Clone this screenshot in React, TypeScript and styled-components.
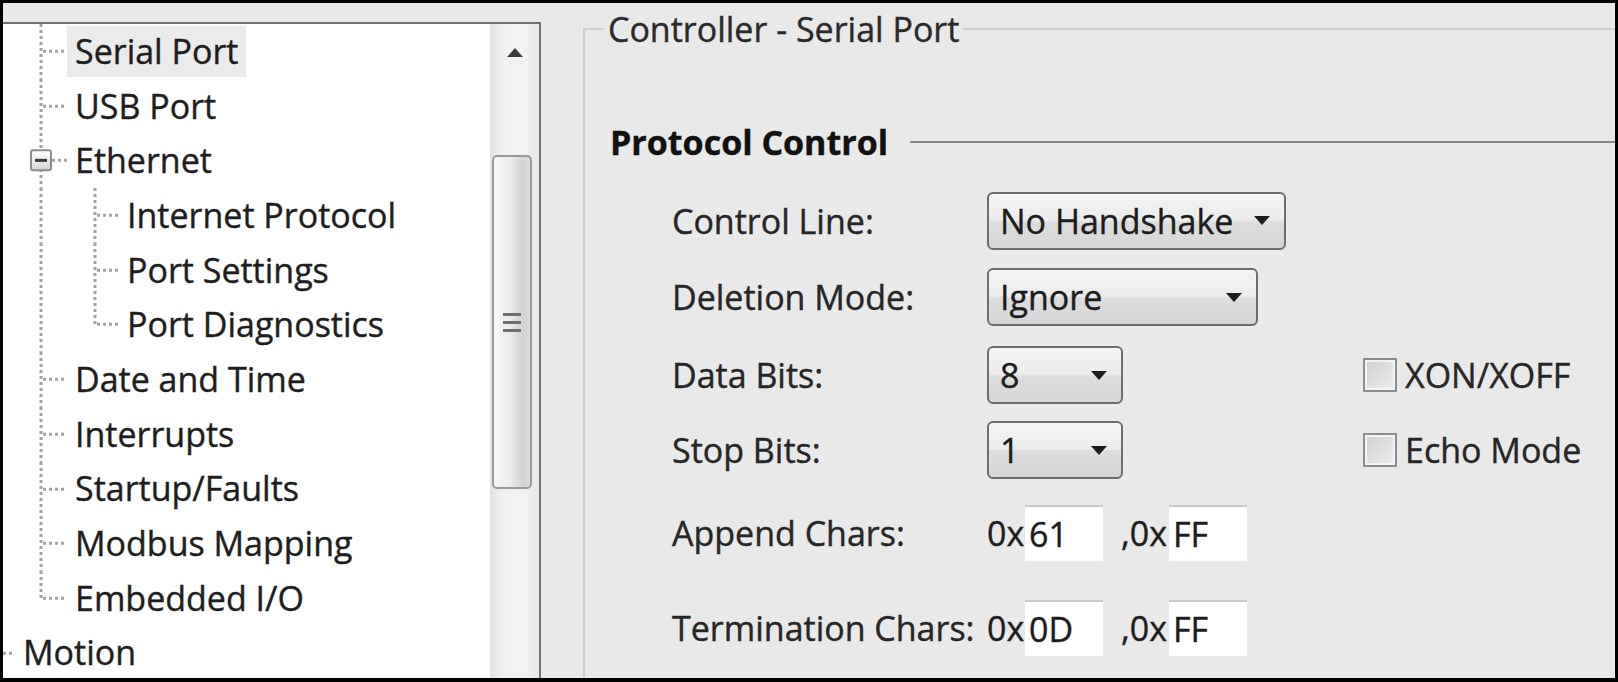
import React from "react";
import styled, { createGlobalStyle } from "styled-components";

const GlobalStyle = createGlobalStyle`
  html, body {
    margin: 0;
    padding: 0;
    background: #000;
  }
  body {
    font-family: "Open Sans", "Noto Sans", sans-serif;
  }
`;

// ---------------------------------------------------------------- data

type TreeNode = {
  label: string;
  level: 0 | 1 | 2;
  selected?: boolean;
  expanded?: boolean;
  last?: boolean;
};

const nodes: TreeNode[] = [
  { label: "Serial Port", level: 1, selected: true },
  { label: "USB Port", level: 1 },
  { label: "Ethernet", level: 1, expanded: true },
  { label: "Internet Protocol", level: 2 },
  { label: "Port Settings", level: 2 },
  { label: "Port Diagnostics", level: 2, last: true },
  { label: "Date and Time", level: 1 },
  { label: "Interrupts", level: 1 },
  { label: "Startup/Faults", level: 1 },
  { label: "Modbus Mapping", level: 1 },
  { label: "Embedded I/O", level: 1, last: true },
  { label: "Motion", level: 0 },
];

const GUIDE_WIDTH = { 0: 12, 1: 64, 2: 116 };

// ---------------------------------------------------------------- tree

const TreeGuides = ({ node, index }: { node: TreeNode; index: number }) => {
  const dot = { stroke: "#a3a3a3", strokeWidth: 3, strokeDasharray: "3 3" };
  const inLevel1 = index <= 10;
  const inLevel2 = index >= 3 && index <= 5;

  return (
    <svg width={GUIDE_WIDTH[node.level]} height="100%" style={{ flex: "none" }}>
      {inLevel1 && <line x1={38} y1={0} x2={38} y2={index === 10 ? "50%" : "100%"} {...dot} />}
      {inLevel2 && <line x1={92} y1={0} x2={92} y2={node.last ? "50%" : "100%"} {...dot} />}
      {node.level === 0 && <line x1={0} y1="50%" x2={12} y2="50%" {...dot} />}
      {node.level === 1 && (
        <line x1={node.expanded ? 49 : 40} y1="50%" x2={64} y2="50%" {...dot} />
      )}
      {node.level === 2 && <line x1={94} y1="50%" x2={116} y2="50%" {...dot} />}
      {node.expanded && (
        <g>
          <defs>
            <linearGradient id="exp" x1="0" y1="0" x2="0" y2="1">
              <stop offset="0" stopColor="#ffffff" />
              <stop offset="1" stopColor="#d4d4d4" />
            </linearGradient>
          </defs>
          <rect x={28} y="calc(50% - 10px)" width={20} height={20} rx={2} fill="url(#exp)" stroke="#8c8c8c" strokeWidth={2} />
          <line x1={32} y1="50%" x2={44} y2="50%" stroke="#3a3a3a" strokeWidth={3} />
        </g>
      )}
    </svg>
  );
};

// ---------------------------------------------------------------- form

const Combo = ({ value, width }: { value: string; width: number }) => (
  <ComboBox $width={width}>
    <span>{value}</span>
    <ComboArrow />
  </ComboBox>
);

const Check = ({ label }: { label: string }) => (
  <CheckCell>
    <CheckBox />
    {label}
  </CheckCell>
);

const HexPair = ({ a, b }: { a: string; b: string }) => (
  <HexGroup>
    <HexPrefix>0x</HexPrefix>
    <HexBox>{a}</HexBox>
    <HexSep>,0x</HexSep>
    <HexBox>{b}</HexBox>
  </HexGroup>
);

export default function App() {
  return (
    <>
      <GlobalStyle />
      <Screen>
        <LeftColumn>
          <TreePanel>
            <TreeList>
              {nodes.map((n, i) => (
                <TreeRow key={n.label}>
                  <TreeGuides node={n} index={i} />
                  <TreeLabel $selected={!!n.selected}>{n.label}</TreeLabel>
                </TreeRow>
              ))}
            </TreeList>
            <ScrollBar>
              <ScrollButton>
                <UpArrow />
              </ScrollButton>
              <ScrollTrack>
                <Thumb>
                  <Grip>
                    <i />
                    <i />
                    <i />
                  </Grip>
                </Thumb>
              </ScrollTrack>
            </ScrollBar>
          </TreePanel>
        </LeftColumn>

        <RightPanel>
          <GroupBox>
            <GroupTitle>Controller - Serial Port</GroupTitle>
            <SectionHeader>Protocol Control</SectionHeader>
            <Form>
              <FieldRow $top={29} $height={59}>
                <FieldLabel>Control Line:</FieldLabel>
                <Combo value="No Handshake" width={299} />
              </FieldRow>
              <FieldRow $top={17} $height={60}>
                <FieldLabel>Deletion Mode:</FieldLabel>
                <Combo value="Ignore" width={271} />
              </FieldRow>
              <FieldRow $top={19} $height={57}>
                <FieldLabel>Data Bits:</FieldLabel>
                <Combo value="8" width={136} />
                <Check label="XON/XOFF" />
              </FieldRow>
              <FieldRow $top={18} $height={58}>
                <FieldLabel>Stop Bits:</FieldLabel>
                <Combo value="1" width={136} />
                <Check label="Echo Mode" />
              </FieldRow>
              <FieldRow $top={26} $height={56}>
                <FieldLabel>Append Chars:</FieldLabel>
                <HexPair a="61" b="FF" />
              </FieldRow>
              <FieldRow $top={38} $height={57}>
                <FieldLabel>Termination Chars:</FieldLabel>
                <HexPair a="0D" b="FF" />
              </FieldRow>
            </Form>
          </GroupBox>
        </RightPanel>
      </Screen>
    </>
  );
}

// =================================================================

const Screen = styled.div`
  width: 1618px;
  height: 682px;
  box-sizing: border-box;
  border: 3px solid #000;
  border-bottom-width: 4px;
  background: #e9e9e9;
  display: flex;
  overflow: hidden;
  color: #1e1e1e;
  font-size: 34px;
  -webkit-text-stroke: 0.4px currentColor;
`;

const LeftColumn = styled.div`
  width: 538px;
  flex: none;
  padding-top: 19px;
  display: flex;
  flex-direction: column;
`;

const TreePanel = styled.div`
  flex: 1;
  display: flex;
  min-height: 0;
  background: #fff;
  border-top: 2px solid #6f6f6f;
  border-right: 2px solid #6f6f6f;
`;

const TreeList = styled.div`
  flex: 1;
  overflow: hidden;
`;

const TreeRow = styled.div`
  height: 54.7px;
  display: flex;
  align-items: center;
  white-space: nowrap;
`;

const TreeLabel = styled.span<{ $selected: boolean }>`
  height: 51px;
  line-height: 51px;
  padding: 0 8px;
  background: ${(p) => (p.$selected ? "#ebebeb" : "transparent")};
`;

const ScrollBar = styled.div`
  width: 49px;
  flex: none;
  display: flex;
  flex-direction: column;
  background: linear-gradient(to right, #e2e2e2, #f1f1f1 25%, #f3f3f3 70%, #e6e6e6);
`;

const ScrollButton = styled.div`
  height: 56px;
  display: flex;
  align-items: center;
  justify-content: center;
`;

const UpArrow = styled.div`
  width: 0;
  height: 0;
  border-left: 8px solid transparent;
  border-right: 8px solid transparent;
  border-bottom: 9px solid #3a3a3a;
`;

const ScrollTrack = styled.div`
  flex: 1;
  padding-top: 75px;
`;

const Thumb = styled.div`
  width: 40px;
  height: 334px;
  margin-left: 2px;
  box-sizing: border-box;
  border: 2px solid #9a9a9a;
  border-radius: 5px;
  background: linear-gradient(to right, #f7f7f7, #ececec 45%, #d2d2d2 80%, #dcdcdc);
  display: flex;
  align-items: center;
  justify-content: center;
`;

const Grip = styled.div`
  display: flex;
  flex-direction: column;
  gap: 5px;

  i {
    display: block;
    width: 18px;
    height: 3px;
    background: #6f6f6f;
  }
`;

const RightPanel = styled.div`
  flex: 1;
  padding-left: 42px;
  min-width: 0;
`;

const GroupBox = styled.fieldset`
  margin: 6px 0 0;
  padding: 0 0 0 19px;
  min-width: 0;
  height: 100%;
  border: 2px solid #cfcfcf;
  border-right: none;
  border-bottom: none;
`;

const GroupTitle = styled.legend`
  padding: 0 4px;
  line-height: 40px;
  color: #2a2a2a;
`;

const SectionHeader = styled.div`
  margin: 73px 0 0 6px;
  display: flex;
  align-items: center;
  line-height: 40px;
  font-weight: 700;
  color: #111;

  &::after {
    content: "";
    flex: 1;
    height: 2px;
    margin-left: 22px;
    background: #858585;
  }
`;

const Form = styled.div`
  margin-left: 68px;
  display: flex;
  flex-direction: column;
`;

const FieldRow = styled.div<{ $top: number; $height: number }>`
  margin-top: ${(p) => p.$top}px;
  height: ${(p) => p.$height}px;
  display: grid;
  grid-template-columns: 315px 376px auto;
  align-items: center;
`;

const FieldLabel = styled.span`
  white-space: nowrap;
  color: #262626;
`;

const ComboBox = styled.div<{ $width: number }>`
  width: ${(p) => p.$width}px;
  height: 58px;
  box-sizing: border-box;
  padding: 0 14px 0 11px;
  display: flex;
  align-items: center;
  justify-content: space-between;
  border: 2px solid #6e6e6e;
  border-radius: 6px;
  background: linear-gradient(#f4f4f4, #ececec 48%, #dddddd 52%, #d6d6d6);
  color: #1c1c1c;
`;

const ComboArrow = styled.span`
  width: 0;
  height: 0;
  border-left: 8px solid transparent;
  border-right: 8px solid transparent;
  border-top: 9px solid #1c1c1c;
`;

const CheckCell = styled.label`
  display: flex;
  align-items: center;
  gap: 8px;
  white-space: nowrap;
  color: #262626;
`;

const CheckBox = styled.span`
  width: 34px;
  height: 34px;
  box-sizing: border-box;
  border: 2px solid #8c8c8c;
  box-shadow: inset 0 0 0 2px #f4f4f4;
  background: linear-gradient(135deg, #cfcfcf, #eeeeee);
`;

const HexGroup = styled.div`
  display: flex;
  align-items: center;
  grid-column: 2 / span 2;
`;

const HexPrefix = styled.span`
  width: 38px;
`;

const HexBox = styled.span`
  width: 78px;
  height: 56px;
  box-sizing: border-box;
  padding-left: 4px;
  display: flex;
  align-items: center;
  background: #fff;
  border-top: 2px solid #c9c9c9;
  color: #1c1c1c;
`;

const HexSep = styled.span`
  width: 66px;
  box-sizing: border-box;
  padding-right: 2px;
  text-align: right;
`;
